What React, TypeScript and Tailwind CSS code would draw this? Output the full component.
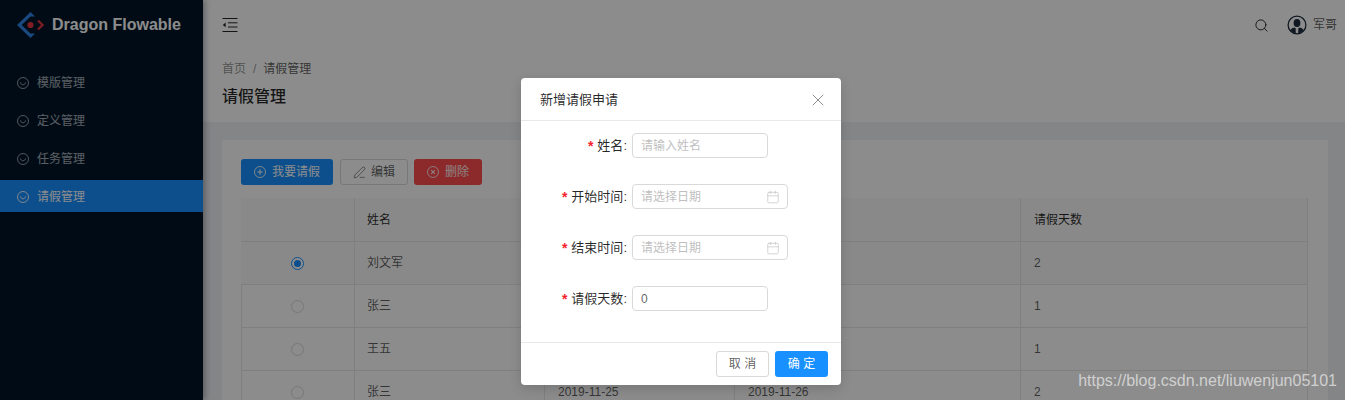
import React from 'react';
import { Search, X, Calendar, PenLine } from 'lucide-react';

const FONT = "font-['Liberation_Sans','Noto_Sans_CJK_SC',sans-serif]";

const MENU = ['模版管理', '定义管理', '任务管理', '请假管理'];

const ROWS = [
  { name: '刘文军', start: '2019-11-21', end: '2019-11-22', days: 2, selected: true },
  { name: '张三', start: '2019-11-22', end: '2019-11-22', days: 1, selected: false },
  { name: '王五', start: '2019-11-23', end: '2019-11-23', days: 1, selected: false },
  { name: '张三', start: '2019-11-25', end: '2019-11-26', days: 2, selected: false },
];

const Logo = () => (
  <svg width="28" height="26" viewBox="0 0 28 26" fill="none">
    <path d="M13.5 0 L0 13 L13.5 26 L18 21.5 L13.5 21.5 L4.6 13 L13.5 4.5 L18 4.5 Z" fill="#2f86e8" />
    <path d="M21 8.5 L25.5 13 L21 17.5" stroke="#e0353f" strokeWidth="2.4" />
    <circle cx="13.5" cy="13" r="3.1" fill="#e8363f" />
  </svg>
);

const SmileIcon = () => (
  <svg width="12" height="12" viewBox="0 0 12 12" fill="none" stroke="currentColor" strokeWidth="0.9">
    <circle cx="6" cy="6" r="5.5" />
    <path d="M3.5 5.4 C4 8.6 8 8.6 8.5 5.4" />
  </svg>
);

const IndentIcon = () => (
  <svg width="16" height="14" viewBox="0 0 16 14" fill="none" stroke="#262626" strokeWidth="1">
    <path d="M0.5 0.5 H15.5 M6 4.8 H15.5 M6 9 H15.5 M0.5 13.5 H15.5" />
    <path d="M3.6 4.6 L0.8 6.9 L3.6 9.2 Z" fill="#262626" stroke="none" />
  </svg>
);

const AvatarIcon = () => (
  <svg width="20" height="20" viewBox="0 0 20 20" fill="none">
    <circle cx="10" cy="10" r="8.9" stroke="#1f2d3d" strokeWidth="1.3" />
    <ellipse cx="10" cy="8" rx="3.4" ry="3.9" fill="#1f2d3d" />
    <path d="M3.5 15 C5 12.5 7 12.5 8.6 13 L8.8 18.4 C6.5 18.2 4.8 17 3.5 15 Z" fill="#1f2d3d" />
    <path d="M16.5 15 C15 12.5 13 12.5 11.4 13 L11.2 18.4 C13.5 18.2 15.2 17 16.5 15 Z" fill="#1f2d3d" />
  </svg>
);

const PlusCircleIcon = () => (
  <svg width="12" height="12" viewBox="0 0 12 12" fill="none" stroke="currentColor">
    <circle cx="6" cy="6" r="5.5" strokeWidth="0.9" />
    <path d="M3.2 6 H8.8 M6 3.2 V8.8" strokeWidth="1.1" />
  </svg>
);

const CloseCircleIcon = () => (
  <svg width="12" height="12" viewBox="0 0 12 12" fill="none" stroke="currentColor">
    <circle cx="6" cy="6" r="5.5" strokeWidth="0.9" />
    <path d="M4.2 4.2 L7.8 7.8 M7.8 4.2 L4.2 7.8" strokeWidth="1.1" />
  </svg>
);

const Radio = ({ checked }: { checked: boolean }) => (
  <span
    className={`flex h-[13px] w-[13px] items-center justify-center rounded-full border bg-white ${
      checked ? 'border-[#1890ff]' : 'border-[#d9d9d9]'
    }`}
  >
    {checked && <span className="h-[7px] w-[7px] rounded-full bg-[#1890ff]" />}
  </span>
);

const FormRow = ({ label, children }: { label: string; children: React.ReactNode }) => (
  <div className="mb-[26px] flex h-[25px] items-center">
    <label className="flex w-[111px] items-center justify-end pr-[5px] pt-[1px] text-[13px] text-black/85">
      <span className="mr-[4px] text-[14px] font-bold text-[#f5222d]">*</span>
      {label}:
    </label>
    {children}
  </div>
);

const DateInput = () => (
  <div className="relative w-[156px]">
    <input
      placeholder="请选择日期"
      className="h-[25px] w-full rounded-[4px] border border-[#d9d9d9] pl-[8px] pt-[1px] text-[12px] outline-none placeholder:text-[#bfbfbf]"
    />
    <Calendar size={14} strokeWidth={1.1} className="absolute right-[8px] top-[6px] text-[#bfbfbf]" />
  </div>
);

export default function App() {
  return (
    <div className={`relative flex h-[400px] w-[1345px] overflow-hidden bg-[#f0f2f5] ${FONT}`}>
      {/* sidebar */}
      <aside className="z-10 flex w-[203px] shrink-0 flex-col bg-[#001529] shadow-[2px_0_6px_rgba(0,21,41,0.35)]">
        <div className="flex h-[50px] items-center gap-[7px] pl-[17px]">
          <Logo />
          <span className="text-[16px] font-bold text-white">Dragon Flowable</span>
        </div>
        <nav className="flex flex-col gap-[6px] pt-[16px]">
          {MENU.map((item, i) => (
            <div
              key={item}
              className={`flex h-[32px] items-center gap-[8px] pl-[17px] pt-[1px] text-[12px] ${
                i === 3 ? 'bg-[#1890ff] text-white' : 'text-white/65'
              }`}
            >
              <SmileIcon />
              {item}
            </div>
          ))}
        </nav>
      </aside>

      <div className="flex min-w-0 flex-1 flex-col">
        {/* top bar */}
        <header className="flex h-[50px] shrink-0 items-center justify-between bg-white pl-[19px] pr-[8px] shadow-[0_1px_4px_rgba(0,21,41,0.08)]">
          <IndentIcon />
          <div className="flex items-center">
            <Search size={15} strokeWidth={1.5} className="mr-[18px] text-[#262626]" />
            <AvatarIcon />
            <span className="ml-[6px] text-[12px] text-black/65">军哥</span>
          </div>
        </header>

        {/* page title */}
        <div className="h-[72px] shrink-0 bg-white pl-[19px] pt-[10px]">
          <div className="flex h-[17px] items-center text-[12px] text-black/45">
            首页
            <span className="mx-[7px]">/</span>
            <span className="text-black/65">请假管理</span>
          </div>
          <h1 className="mt-[8px] text-[16px] font-medium leading-[24px] text-black/85">请假管理</h1>
        </div>

        {/* card */}
        <main className="ml-[19px] mr-[17px] mt-[18px] flex-1 bg-white px-[19px] pt-[19px]">
          <div className="flex gap-[6px] text-[12px]">
            <button className="mr-[1px] flex h-[26px] w-[92px] items-center justify-center gap-[6px] rounded-[3px] bg-[#1890ff] text-white">
              <PlusCircleIcon />
              我要请假
            </button>
            <button className="flex h-[26px] w-[68px] items-center justify-center gap-[5px] rounded-[3px] border border-[#d9d9d9] text-black/65">
              <PenLine size={13} strokeWidth={1.2} />
              编辑
            </button>
            <button className="flex h-[26px] w-[68px] items-center justify-center gap-[6px] rounded-[3px] bg-[#ff4d4f] text-white/90">
              <CloseCircleIcon />
              删除
            </button>
          </div>
          <table className="mt-[13px] w-[1066px] table-fixed border-collapse text-left text-[12px]">
            <colgroup>
              <col className="w-[113px]" />
              <col className="w-[190px]" />
              <col className="w-[190px]" />
              <col className="w-[286px]" />
              <col className="w-[287px]" />
            </colgroup>
            <thead>
              <tr className="h-[43px] bg-[#fafafa] text-black/85">
                <th className="border border-[#e8e8e8] border-l-[#fafafa] border-t-[#fafafa] font-normal" />
                <th className="border border-[#e8e8e8] border-t-[#fafafa] pl-[12px] font-normal">姓名</th>
                <th className="border border-[#e8e8e8] border-t-[#fafafa] pl-[13px] font-normal">开始时间</th>
                <th className="border border-[#e8e8e8] border-t-[#fafafa] pl-[13px] font-normal">结束时间</th>
                <th className="border border-[#e8e8e8] border-t-[#fafafa] pl-[13px] font-normal">请假天数</th>
              </tr>
            </thead>
            <tbody>
              {ROWS.map((row, i) => (
                <tr key={i} className={`h-[43px] text-black/65 ${row.selected ? 'bg-[#fafafa]' : ''}`}>
                  <td className={`border border-[#e8e8e8] ${row.selected ? 'border-l-[#fafafa]' : ''}`}>
                    <div className="flex justify-center pr-[1px]">
                      <Radio checked={row.selected} />
                    </div>
                  </td>
                  <td className="border border-[#e8e8e8] pl-[12px]">{row.name}</td>
                  <td className="border border-[#e8e8e8] pl-[13px]">{row.start}</td>
                  <td className="border border-[#e8e8e8] pl-[13px]">{row.end}</td>
                  <td className="border border-[#e8e8e8] pl-[13px]">{row.days}</td>
                </tr>
              ))}
            </tbody>
          </table>
        </main>
      </div>

      {/* modal mask */}
      <div className="absolute inset-0 z-20 flex justify-center bg-black/45 pl-[17px] pt-[78px]">
        <div className="h-[307px] w-[320px] rounded-[4px] bg-white shadow-[0_4px_12px_rgba(0,0,0,0.15)]">
          <div className="flex h-[43px] items-center justify-between border-b border-[#e8e8e8] pl-[19px] pr-[13px] pt-[1px] text-[13px] text-black/85">
            新增请假申请
            <X size={20} strokeWidth={1.2} className="text-black/45" />
          </div>
          <div className="h-[222px] border-b border-[#e8e8e8] pt-[12px]">
            <FormRow label="姓名">
              <input
                placeholder="请输入姓名"
                className="h-[25px] w-[136px] rounded-[4px] border border-[#d9d9d9] pl-[8px] pt-[1px] text-[12px] outline-none placeholder:text-[#bfbfbf]"
              />
            </FormRow>
            <FormRow label="开始时间">
              <DateInput />
            </FormRow>
            <FormRow label="结束时间">
              <DateInput />
            </FormRow>
            <FormRow label="请假天数">
              <input
                defaultValue="0"
                className="h-[25px] w-[136px] rounded-[4px] border border-[#d9d9d9] pl-[8px] pt-[1px] text-[12px] text-black/65 outline-none"
              />
            </FormRow>
          </div>
          <div className="flex justify-end gap-[6px] pr-[13px] pt-[8px] text-[12px]">
            <button className="h-[26px] w-[53px] rounded-[3px] border border-[#d9d9d9] text-black/65">取 消</button>
            <button className="h-[26px] w-[53px] rounded-[3px] bg-[#1890ff] text-white">确 定</button>
          </div>
        </div>
      </div>

      {/* blog watermark */}
      <span className="absolute bottom-[9px] right-[8px] z-30 text-[16px] leading-[20px] text-white/60">
        https://blog.csdn.net/liuwenjun05101
      </span>
    </div>
  );
}
